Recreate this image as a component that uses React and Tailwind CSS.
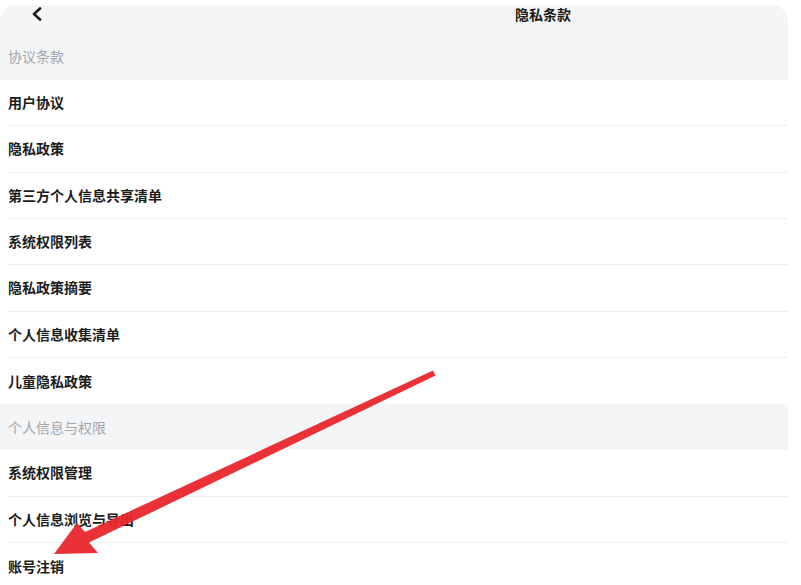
const agreementItems = [
  '用户协议',
  '隐私政策',
  '第三方个人信息共享清单',
  '系统权限列表',
  '隐私政策摘要',
  '个人信息收集清单',
  '儿童隐私政策',
]

const personalItems = ['系统权限管理', '个人信息浏览与导出', '账号注销']

function SectionLabel({ children, className = '' }) {
  return (
    <div className={`flex items-center pl-[8px] text-[14px] text-[#a2a6ad] ${className}`}>
      {children}
    </div>
  )
}

function Row({ label, last }) {
  return (
    <div className="bg-white pl-[8px]">
      <div
        className={`flex h-[46.33px] items-center text-[14px] font-bold text-[#1c1c1c] ${
          last ? '' : 'border-b border-[#efefef]'
        }`}
      >
        {label}
      </div>
    </div>
  )
}

function Arrow() {
  return (
    <svg
      className="pointer-events-none absolute left-0 top-0"
      width="801"
      height="585"
      viewBox="0 0 801 585"
    >
      <polygon
        points="433,370.5 85,532 77,523 54,554 98,553 89,542.5 435.5,375.5"
        fill="#e8262c"
        opacity="0.95"
      />
    </svg>
  )
}

export default function App() {
  return (
    <div
      className="relative h-[585px] w-[801px] overflow-hidden bg-white"
      style={{ fontFamily: '"Noto Sans CJK SC", "Noto Sans", sans-serif' }}
    >
      <div className="mt-[5px] w-[788px] overflow-hidden rounded-t-[16px] bg-[#f4f5f7]">
        {/* header */}
        <div className="relative flex h-[22px] items-center pb-[4px]">
          <svg className="ml-[31px]" width="12" height="14" viewBox="0 0 12 14">
            <path
              d="M9 1.5 L3 7 L9 12.5"
              fill="none"
              stroke="#1a1a1a"
              strokeWidth="2.6"
              strokeLinecap="round"
              strokeLinejoin="round"
            />
          </svg>
          <div className="ml-[472px] text-[14px] font-bold text-[#1a1a1a]">隐私条款</div>
        </div>

        <SectionLabel className="h-[53px] pt-[5px]">协议条款</SectionLabel>
        {agreementItems.map((item, i) => (
          <Row key={item} label={item} last={i === agreementItems.length - 1} />
        ))}

        <SectionLabel className="h-[46px]">个人信息与权限</SectionLabel>
        {personalItems.map((item, i) => (
          <Row key={item} label={item} last={i === personalItems.length - 1} />
        ))}
      </div>

      <Arrow />
    </div>
  )
}
